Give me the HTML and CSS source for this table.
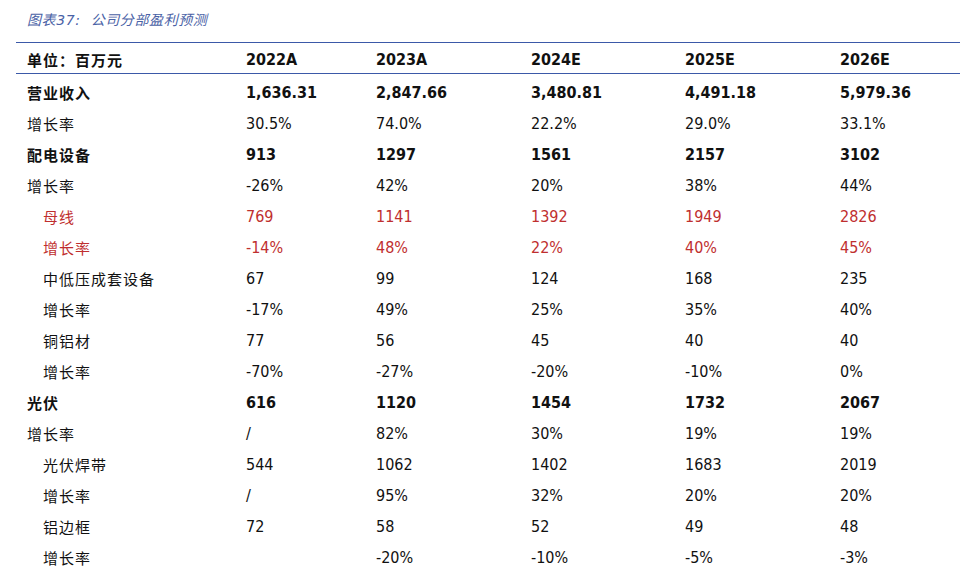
FILE: index.html
```html
<!DOCTYPE html>
<html lang="zh">
<head>
<meta charset="utf-8">
<title>公司分部盈利预测</title>
<link rel="stylesheet" href="styles.css">
</head>
<body>
<div class="title">图表37:&nbsp; 公司分部盈利预测</div>
<div class="tbl">
  <div class="row head">
    <div class="lab">单位：百万元</div>
    <div>2022A</div><div>2023A</div><div>2024E</div><div>2025E</div><div>2026E</div>
  </div>
  <div class="body">
    <div class="row bold">
      <div class="lab">营业收入</div>
      <div>1,636.31</div><div>2,847.66</div><div>3,480.81</div><div>4,491.18</div><div>5,979.36</div>
    </div>
    <div class="row">
      <div class="lab">增长率</div>
      <div>30.5%</div><div>74.0%</div><div>22.2%</div><div>29.0%</div><div>33.1%</div>
    </div>
    <div class="row bold">
      <div class="lab">配电设备</div>
      <div>913</div><div>1297</div><div>1561</div><div>2157</div><div>3102</div>
    </div>
    <div class="row">
      <div class="lab">增长率</div>
      <div>-26%</div><div>42%</div><div>20%</div><div>38%</div><div>44%</div>
    </div>
    <div class="row red">
      <div class="lab sub">母线</div>
      <div>769</div><div>1141</div><div>1392</div><div>1949</div><div>2826</div>
    </div>
    <div class="row red">
      <div class="lab sub">增长率</div>
      <div>-14%</div><div>48%</div><div>22%</div><div>40%</div><div>45%</div>
    </div>
    <div class="row">
      <div class="lab sub">中低压成套设备</div>
      <div>67</div><div>99</div><div>124</div><div>168</div><div>235</div>
    </div>
    <div class="row">
      <div class="lab sub">增长率</div>
      <div>-17%</div><div>49%</div><div>25%</div><div>35%</div><div>40%</div>
    </div>
    <div class="row">
      <div class="lab sub">铜铝材</div>
      <div>77</div><div>56</div><div>45</div><div>40</div><div>40</div>
    </div>
    <div class="row">
      <div class="lab sub">增长率</div>
      <div>-70%</div><div>-27%</div><div>-20%</div><div>-10%</div><div>0%</div>
    </div>
    <div class="row bold">
      <div class="lab">光伏</div>
      <div>616</div><div>1120</div><div>1454</div><div>1732</div><div>2067</div>
    </div>
    <div class="row">
      <div class="lab">增长率</div>
      <div>/</div><div>82%</div><div>30%</div><div>19%</div><div>19%</div>
    </div>
    <div class="row">
      <div class="lab sub">光伏焊带</div>
      <div>544</div><div>1062</div><div>1402</div><div>1683</div><div>2019</div>
    </div>
    <div class="row">
      <div class="lab sub">增长率</div>
      <div>/</div><div>95%</div><div>32%</div><div>20%</div><div>20%</div>
    </div>
    <div class="row">
      <div class="lab sub">铝边框</div>
      <div>72</div><div>58</div><div>52</div><div>49</div><div>48</div>
    </div>
    <div class="row">
      <div class="lab sub">增长率</div>
      <div></div><div>-20%</div><div>-10%</div><div>-5%</div><div>-3%</div>
    </div>
  </div>
</div>
</body>
</html>
```
FILE: styles.css
```css
html, body {
  margin: 0;
  padding: 0;
  background: #ffffff;
}
body {
  width: 960px;
  height: 582px;
  overflow: hidden;
  font-family: "DejaVu Sans Condensed", "DejaVu Sans", "Noto Sans CJK SC", sans-serif;
  font-stretch: condensed;
  color: #111111;
}
.title {
  height: 42px;
  box-sizing: border-box;
  padding: 11px 0 0 27px;
  font-size: 14px;
  line-height: 18px;
  letter-spacing: 0.6px;
  font-style: italic;
  color: #4a62a6;
  font-family: "DejaVu Sans", "Noto Sans CJK SC", sans-serif;
  font-stretch: normal;
}
.tbl {
  margin-left: 16px;
  border-top: 1.5px solid #3b59a8;
}
.row {
  display: grid;
  grid-template-columns: 230px 130px 155px 154px 155px 1fr;
  height: 31.07px;
  align-items: center;
  font-size: 16px;
}
.row > div {
  line-height: 20px;
  white-space: nowrap;
}
.lab {
  padding-left: 11px;
  font-family: "Noto Sans CJK SC", sans-serif;
  font-size: 15px;
  letter-spacing: 1px;
}
.lab.sub {
  padding-left: 27px;
}
.head {
  height: 31px;
  border-bottom: 1.5px solid #3b59a8;
  font-weight: bold;
  padding-top: 3px;
  box-sizing: border-box;
}
.body {
  padding-top: 3px;
}
.bold {
  font-weight: bold;
}
.red {
  color: #bf2f2f;
}
```
